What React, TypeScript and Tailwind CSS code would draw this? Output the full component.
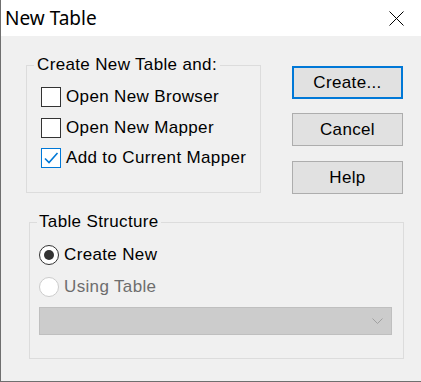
import React, { useState } from 'react';

const ui = { fontFamily: '"Liberation Sans", Arial, sans-serif' };

const CheckRow = ({ label, checked, onToggle }: { label: string; checked: boolean; onToggle: () => void }) => (
  <label className="flex h-[20px] items-center cursor-default" onClick={onToggle}>
    <span
      className={`flex h-[20px] w-[20px] items-center justify-center border bg-white ${
        checked ? 'border-[#0078d7]' : 'border-[#333333]'
      }`}
    >
      {checked && (
        <svg width="18" height="18" viewBox="0 0 18 18" fill="none">
          <path d="M3 9.5 L7 13.5 L15.5 4" stroke="#0078d7" strokeWidth="1.6" />
        </svg>
      )}
    </span>
    <span className="ml-[5px] text-[17px] leading-[20px] tracking-[0.35px] text-black">{label}</span>
  </label>
);

const Radio = ({ label, selected, disabled }: { label: string; selected?: boolean; disabled?: boolean }) => (
  <div className="flex h-[20px] items-center">
    <span
      className={`flex h-[20px] w-[20px] items-center justify-center rounded-full border bg-white ${
        disabled ? 'border-[#cccccc]' : 'border-[#333333]'
      }`}
    >
      {selected && <span className="h-[10px] w-[10px] rounded-full bg-[#333333]" />}
    </span>
    <span
      className={`ml-[5px] text-[17px] leading-[20px] tracking-[0.35px] ${
        disabled ? 'text-[#6d6d6d]' : 'text-black'
      }`}
    >
      {label}
    </span>
  </div>
);

const Button = ({ label, primary }: { label: string; primary?: boolean }) => (
  <button
    className={`flex h-[33px] w-[111px] items-center justify-center bg-[#e1e1e1] text-[17px] tracking-[0.35px] text-black ${
      primary ? 'border-2 border-[#0078d7]' : 'border border-[#adadad]'
    }`}
  >
    {label}
  </button>
);

export default function App() {
  const [browser, setBrowser] = useState(false);
  const [mapper, setMapper] = useState(false);
  const [current, setCurrent] = useState(true);

  return (
    <div className="h-[382px] w-[421px] border-b border-l border-[#6f6f6f] bg-[#f0f0f0]" style={ui}>
      {/* Title bar */}
      <div className="flex h-[36px] items-center justify-between bg-white pl-[4px] pr-[17px]">
        <span className="text-[19px] text-black" style={{ fontFamily: '"Noto Sans", sans-serif' }}>
          New Table
        </span>
        <svg width="15" height="15" viewBox="0 0 15 15">
          <path d="M0.5 0.5 L14.5 14.5 M14.5 0.5 L0.5 14.5" stroke="#000" strokeWidth="1" />
        </svg>
      </div>

      {/* Body */}
      <div className="flex">
        <fieldset className="ml-[25px] mt-[19px] h-[138px] w-[235px] border border-[#dcdcdc] pl-[7px]">
          <legend className="px-[3px] text-[17px] leading-[20px] tracking-[0.35px] text-black">Create New Table and:</legend>
          <div className="ml-[7px] flex flex-col gap-[10.5px] pt-[12px]">
            <CheckRow label="Open New Browser" checked={browser} onToggle={() => setBrowser(!browser)} />
            <CheckRow label="Open New Mapper" checked={mapper} onToggle={() => setMapper(!mapper)} />
            <CheckRow label="Add to Current Mapper" checked={current} onToggle={() => setCurrent(!current)} />
          </div>
        </fieldset>

        <div className="ml-[31px] mt-[30px] flex flex-col">
          <Button label="Create..." primary />
          <div className="mt-[14px]">
            <Button label="Cancel" />
          </div>
          <div className="mt-[15px]">
            <Button label="Help" />
          </div>
        </div>
      </div>

      <fieldset className="ml-[28px] mt-[18px] h-[147px] w-[375px] border border-[#dcdcdc] pl-[7px]">
        <legend className="px-[2px] text-[17px] leading-[20px] tracking-[0.35px] text-black">Table Structure</legend>
        <div className="ml-[2px] flex flex-col pt-[13px]">
          <Radio label="Create New" selected />
          <div className="mt-[12px]">
            <Radio label="Using Table" disabled />
          </div>
          <div className="mt-[10px] flex h-[28px] w-[353px] items-center justify-end border border-[#bfbfbf] bg-[#cccccc] pr-[8px]">
            <svg width="11" height="7" viewBox="0 0 11 7" fill="none">
              <path d="M0.5 0.5 L5.5 5.5 L10.5 0.5" stroke="#a0a0a0" strokeWidth="1" />
            </svg>
          </div>
        </div>
      </fieldset>
    </div>
  );
}
